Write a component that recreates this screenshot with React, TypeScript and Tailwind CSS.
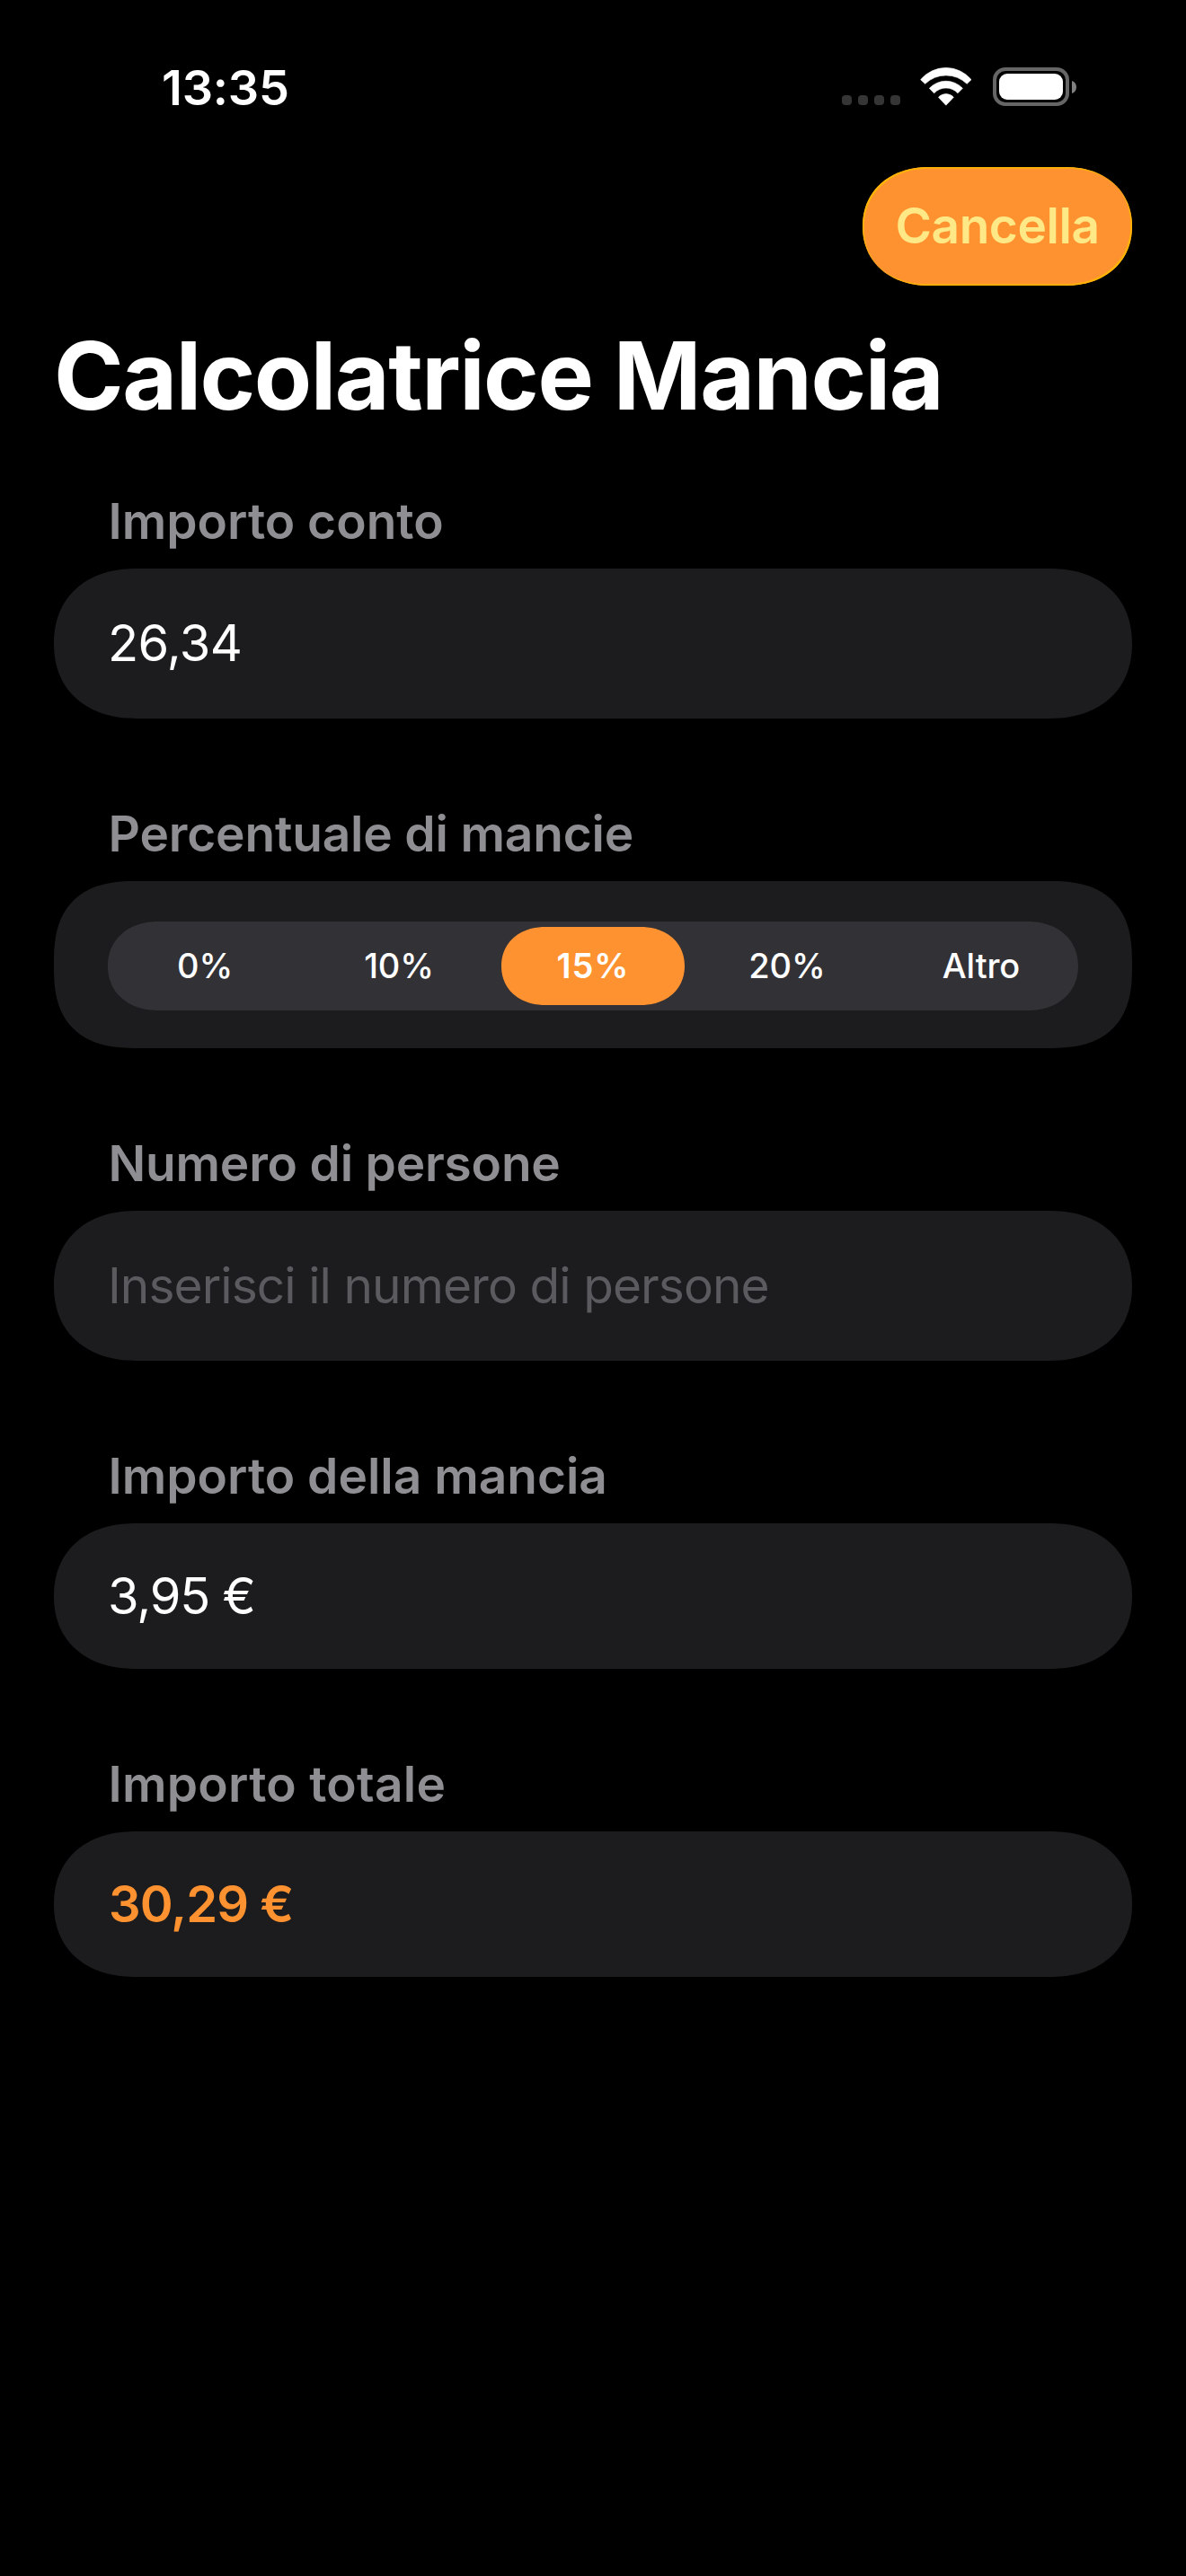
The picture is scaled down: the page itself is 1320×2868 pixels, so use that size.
import type { ReactNode } from 'react';

function StatusIcons() {
  return (
    <div className="flex items-start">
      <div className="mt-[31px] flex gap-[7px]">
        {[0, 1, 2, 3].map((i) => (
          <span key={i} className="size-[11px] rounded-[4px] bg-[#353535]" />
        ))}
      </div>
      <svg
        className="ml-[22px] h-[43px] w-[58px]"
        viewBox="374 74 174 129"
        fill="#fff"
        stroke="#fff"
        strokeWidth="2"
        strokeLinejoin="round"
      >
        <path d="M376 115A110 110 0 0 1 545 115L530.500 129A100 100 0 0 0 391 129Z" />
        <path d="M405 144A76 76 0 0 1 516 144L500 160A54 54 0 0 0 421 160Z" />
        <path d="M435.500 174A34 34 0 0 1 486 174L460.500 200.500Z" />
      </svg>
      <div className="ml-[23px] flex items-center">
        <div className="h-[43px] w-[85px] rounded-[14px] border-4 border-[#666] p-[3px]">
          <div className="h-full w-full rounded-[9px] bg-white" />
        </div>
        <svg className="ml-[3px] h-[14px] w-[5px]" viewBox="0 0 5 14" fill="#808080">
          <path d="M0 0C3 1 5 3.500 5 7S3 13 0 14Z" />
        </svg>
      </div>
    </div>
  );
}

function Section({
  label,
  labelClass = '',
  card,
  children,
}: {
  label: string;
  labelClass?: string;
  card: string;
  children: ReactNode;
}) {
  return (
    <section>
      <h2
        className={`mb-5 pl-[60.5px] text-[55px] leading-[66px] font-semibold text-[#8e8e93] ${labelClass}`}
      >
        {label}
      </h2>
      <div className={`flex items-center bg-[#1c1c1e] px-[60px] ${card}`}>{children}</div>
    </section>
  );
}

const FIELD = 'h-[167px] [border-radius:92px/83.5px] [corner-shape:superellipse(1.15)]';
const RESULT = 'h-[162px] [border-radius:91px/81px] [corner-shape:superellipse(1.15)]';

const OPTIONS = ['0%', '10%', '15%', '20%', 'Altro'];
const SELECTED = '15%';

export default function App() {
  return (
    <div className="flex h-[2868px] w-[1320px] flex-col bg-black px-[60px] font-[Inter,sans-serif] text-white">
      <header className="flex h-[186px] items-start justify-between pt-[75px] pr-[62px] pl-[120px]">
        <div className="-mt-[9px] text-[54px] leading-[64px] font-semibold tracking-[-0.2px]">13:35</div>
        <StatusIcons />
      </header>

      <button className="flex h-[132px] w-[300px] items-center justify-center self-end bg-[#ff9230] pb-[3px] text-[55px] leading-[66px] font-semibold tracking-[-0.45px] text-[#ffe987] shadow-[inset_1.5px_1.5px_1px_#ffb800,inset_-1.5px_-1.5px_1px_#ffb800] [border-radius:74px/66px] [corner-shape:superellipse(1.1)]">
        Cancella
      </button>

      <h1 className="mt-[37px] text-[105px] leading-[126px] font-bold tracking-[-1.5px] whitespace-nowrap">
        Calcolatrice Mancia
      </h1>

      <main className="mt-[66px] flex flex-col gap-[95px]">
        <Section label="Importo conto" card={FIELD}>
          <span className="pb-[1px] text-[56px] leading-[66px] tracking-[-0.6px]">26,34</span>
        </Section>

        <Section
          label="Percentuale di mancie"
          labelClass="tracking-[-0.17px]"
          card="h-[186px] pt-[3px] [border-radius:92px/90px] [corner-shape:superellipse(1.35)]"
        >
          <div className="grid h-[99px] w-full grid-cols-5 bg-[#323236] text-[38px] tracking-[-0.1px] [border-radius:56px/49.5px] [corner-shape:superellipse(1.1)]">
            {OPTIONS.map((option) => (
              <div
                key={option}
                className={
                  option === SELECTED
                    ? 'm-[6px] flex items-center justify-center bg-[#ff9230] font-semibold tracking-[0.9px] [border-radius:49px/43.5px] [corner-shape:superellipse(1.1)]'
                    : 'm-[6px] flex items-center justify-center font-medium'
                }
              >
                {option}
              </div>
            ))}
          </div>
        </Section>

        <Section label="Numero di persone" labelClass="tracking-[-0.2px]" card={FIELD}>
          <span className="pb-[2px] text-[55px] leading-[66px] tracking-[-0.93px] text-[#5a5a5f]">
            Inserisci il numero di persone
          </span>
        </Section>

        <Section label="Importo della mancia" card={RESULT}>
          <span className="text-[56px] leading-[66px] tracking-[-1.2px]">3,95 €</span>
        </Section>

        <Section label="Importo totale" labelClass="tracking-[0.26px]" card={RESULT}>
          <span className="pl-px text-[56px] leading-[66px] font-semibold tracking-[-0.9px] text-[#ff9230]">
            30,29 €
          </span>
        </Section>
      </main>
    </div>
  );
}
